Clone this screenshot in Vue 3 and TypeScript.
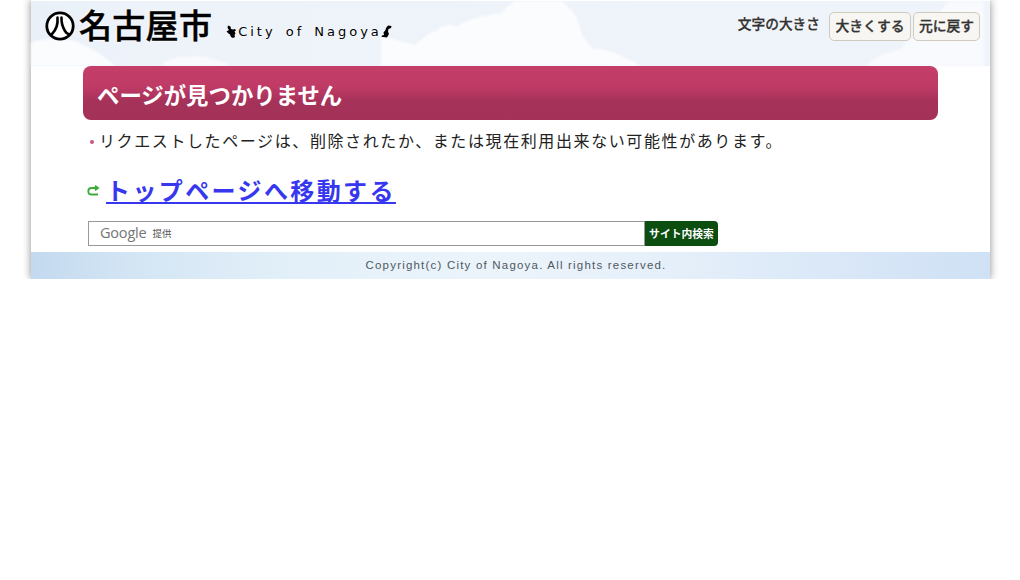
<script setup lang="ts">
const message = "リクエストしたページは、削除されたか、または現在利用出来ない可能性があります。"
const topLink = "トップページへ移動する"
</script>

<template>
  <div class="page">
    <header class="header">
      <svg class="clouds" width="959" height="65" viewBox="0 0 959 65">
        <path d="M0 42c12-6 30-4 44-2 14 6 26 12 40 25H0z" fill="#fafcfe" />
        <path d="M130 65c6-8 20-10 30-9 12-2 26 2 40 9z" fill="#f8fafd" />
        <path d="M350 65V34c12 4 26 8 34 10 8-6 12-12 22-15 6-6 14-6 20-3 14-10 30-12 46-14 0-6 8-8 12-12h46c8 6 16 14 18 24 2 10 8 18 14 24 14 0 24 4 34 10 8 4 16 6 22 14 6 4 16 9 24 13z" fill="#fbfcfe" />
        <path d="M835 65c6-8 20-14 34-16 6-10 14-14 26-16 4-12 14-24 24-33h34v65z" fill="#f8fafd" />
      </svg>
      <div class="logo">
        <svg class="mark" width="30" height="30" viewBox="0 0 30 30">
          <circle cx="15" cy="15" r="13.200" fill="#fff" stroke="#000" stroke-width="2.800" />
          <path d="M12.500 6.500c.6 7-1.500 12.500-5.500 16.500M16.500 6.500c-.4 7 2 11 3.500 13.500 1 1.800 2.400 2.800 3.500 3" fill="none" stroke="#000" stroke-width="2.600" stroke-linecap="round" />
        </svg>
        <span class="city">名古屋市</span>
        <span class="city-en">
          <svg width="11" height="13" viewBox="0 0 11 13"><path d="M2 .5l2.500 1 .5 2.500 2 .5 2-.5 1 1.500-1.500 1 1 2-1 1.500.5 2-2 1-2-1-1-2.500-1.500-1L.5 6.500 3 5 1.500 3z" fill="#000" /></svg>
          <span class="city-en-text">City of Nagoya</span>
          <svg width="11" height="13" viewBox="0 0 11 13"><path d="M7 .5l3.500.5-.5 2-2.500 1-.5 2.500 1 2.500L6 12.500l-4-.5-1.500 0L1 10.500l2-.5L2.500 7.500 4.500 5l.5-2z" fill="#000" /></svg>
        </span>
      </div>
      <div class="size">
        <span class="size-label">文字の大きさ</span>
        <button class="size-btn big">大きくする</button>
        <button class="size-btn">元に戻す</button>
      </div>
    </header>

    <main class="main">
      <h1 class="title">ページが見つかりません</h1>
      <p class="message"><span class="dot"></span>{{ message }}</p>
      <p class="top">
        <svg class="arrow" width="13" height="12" viewBox="0 0 13 12">
          <path d="M11 9.500H4.500C2.500 9.500 1.300 8.200 1.300 6.200S2.500 3 4.500 3H10M8 .8L11 3 8 5.200" fill="none" stroke="#3cab38" stroke-width="1.800" />
        </svg>
        <a class="top-link" href="#">{{ topLink }}</a>
      </p>
      <form class="search" @submit.prevent>
        <div class="search-box">
          <span class="google">Google</span>
          <span class="provided">提供</span>
        </div>
        <button class="search-btn">サイト内検索</button>
      </form>
    </main>

    <footer class="footer">Copyright(c) City of Nagoya. All rights reserved.</footer>
  </div>
</template>

<style>
html,
body {
  margin: 0;
  background: #fff;
}
</style>

<style scoped>
.page {
  width: 959px;
  height: 279px;
  margin-left: 31px;
  display: flex;
  flex-direction: column;
  background: #fff;
  box-shadow: 0 0 8px 0 rgba(0, 0, 0, 0.45);
  clip-path: inset(0 -8px 0 -8px);
  font-family: "Noto Sans CJK JP", "Liberation Sans", sans-serif;
}

.header {
  position: relative;
  height: 65px;
  margin-top: 1px;
  display: flex;
  justify-content: space-between;
  background: linear-gradient(90deg, #e9f0f8, #eef3fa 12%, #eff4fb);
}

.clouds {
  position: absolute;
  left: 0;
  top: 0;
  filter: blur(1px);
}

.logo {
  position: relative;
  display: flex;
  align-items: center;
  height: 48px;
  padding-left: 14px;
}

.mark {
  flex: none;
  margin-top: 2px;
}

.city {
  margin: 0 0 2px 4px;
  font-size: 33px;
  line-height: 40px;
  font-weight: 500;
  -webkit-text-stroke: 0.5px #000;
  letter-spacing: 0.3px;
  color: #000;
  text-shadow: 0 0 2px #fff, 0 0 3px #fff;
}

.city-en {
  display: flex;
  align-items: center;
  margin: 12px 0 0 14px;
  font-family: "DejaVu Sans", sans-serif;
  font-size: 13px;
  letter-spacing: 2.980px;
  word-spacing: 3px;
  color: #000;
  text-shadow: 0 0 2px #fff;
}

.city-en-text {
  margin: 0 -1px 0 1px;
}

.size {
  position: relative;
  display: flex;
  align-items: flex-start;
  padding: 11px 10px 0 0;
}

.size-label {
  margin: 1px 9px 0 0;
  font-size: 13.700px;
  line-height: 20px;
  font-weight: 500;
  -webkit-text-stroke: 0.3px #333;
  color: #333;
  text-shadow: 0 0 2px #fff, 0 0 2px #fff;
}

.size-btn {
  height: 29px;
  width: 67px;
  padding: 0 0 4px;
  border: 1px solid #cfcabd;
  border-radius: 5px;
  background: #f8f6f2;
  font-family: inherit;
  font-size: 13.800px;
  font-weight: 500;
  -webkit-text-stroke: 0.3px #333;
  color: #333;
}

.big {
  width: 82px;
  margin-right: 2px;
}

.main {
  position: relative;
  flex: 1;
  padding: 0 52px;
}

.title {
  margin: 0;
  height: 54px;
  padding: 0 14px;
  box-sizing: border-box;
  border-radius: 8px;
  background: linear-gradient(#c53e6a, #bf3b66 38%, #a53259 66%, #a33158);
  font-size: 22.400px;
  line-height: 56px;
  font-weight: 700;
  color: #fff;
}

.message {
  display: flex;
  align-items: center;
  margin: 8px 0 0 7px;
  font-size: 16px;
  line-height: 24px;
  letter-spacing: 1.600px;
  color: #222;
}

.dot {
  width: 4px;
  height: 4px;
  margin: 4px 5px 0 0;
  border-radius: 50%;
  background: #c9577a;
}

.top {
  display: flex;
  align-items: center;
  margin: 19px 0 0 4px;
  height: 38px;
}

.arrow {
  margin: 2px 6px 0 0;
}

.top-link {
  font-size: 24px;
  line-height: 38px;
  font-weight: 700;
  letter-spacing: 2.400px;
  color: #3737f0;
}

.search {
  display: flex;
  margin: 12px 0 0 5px;
  height: 25px;
}

.search-box {
  width: 557px;
  box-sizing: border-box;
  display: flex;
  align-items: center;
  padding: 0 0 3px 11px;
  border: 1px solid #999;
  background: #fff;
}

.google {
  font-family: "Open Sans", sans-serif;
  font-size: 14.500px;
  letter-spacing: -0.2px;
  color: #757575;
}

.provided {
  margin: 2px 0 0 6px;
  font-size: 9.500px;
  color: #555;
}

.search-btn {
  width: 73px;
  padding: 0 0 2px;
  border: 0;
  border-radius: 0 4px 4px 0;
  background: #0c4d10;
  font-family: inherit;
  font-size: 10.800px;
  font-weight: 700;
  color: #fff;
}

.footer {
  height: 27px;
  box-sizing: border-box;
  padding-left: 11px;
  background: linear-gradient(90deg, #c3d9ef, #d3e5f4 10%, #e3f0f9 28%, #ecf4fb 48%, #e6f0fa 65%, #d9e7f7 85%, #cfe1f5);
  font-family: "Liberation Sans", sans-serif;
  font-size: 11.500px;
  line-height: 27px;
  letter-spacing: 1.200px;
  text-align: center;
  color: #50585f;
}
</style>
